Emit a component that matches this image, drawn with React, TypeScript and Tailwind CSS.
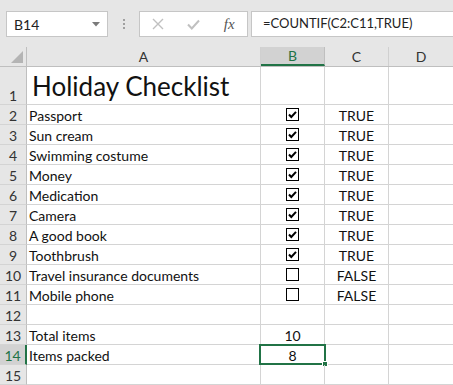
import React from 'react'

const items = [
  { name: 'Passport', packed: true },
  { name: 'Sun cream', packed: true },
  { name: 'Swimming costume', packed: true },
  { name: 'Money', packed: true },
  { name: 'Medication', packed: true },
  { name: 'Camera', packed: true },
  { name: 'A good book', packed: true },
  { name: 'Toothbrush', packed: true },
  { name: 'Travel insurance documents', packed: false },
  { name: 'Mobile phone', packed: false },
]

function CheckBox({ checked }: { checked: boolean }) {
  return (
    <svg className="self-center" width="13" height="13" viewBox="0 0 13 13">
      <rect x="0.5" y="0.5" width="12" height="12" fill="white" stroke="black" />
      {checked && <path d="M3 6.5 L5.3 9 L10 3.8" fill="none" stroke="black" strokeWidth="2" />}
    </svg>
  )
}

type RowProps = {
  num: number
  a?: React.ReactNode
  b?: React.ReactNode
  c?: React.ReactNode
  tall?: boolean
  active?: boolean
}

function Row({ num, a, b, c, tall, active }: RowProps) {
  const h = tall ? 'h-[38px]' : 'h-[20px]'
  return (
    <div className={`flex ${h} leading-[16px]`}>
      <div
        className={`w-[27px] shrink-0 flex items-end justify-center border-b border-[#d4d4d4] text-[14px] ${
          active ? 'bg-[#d2d2d2] text-[#217346] border-r-2 border-r-[#217346]' : 'bg-[#e6e6e6] border-r border-r-[#bfbfbf] text-[#333]'
        }`}
      >
        {num}
      </div>
      <div className="w-[234px] shrink-0 flex items-end pl-[2px] border-r border-b border-[#d4d4d4] whitespace-nowrap">
        {a}
      </div>
      <div className="relative w-[64px] shrink-0 flex items-end justify-center border-r border-b border-[#d4d4d4]">
        {b}
        {active && (
          <>
            <div className="absolute left-[-2px] top-[-1px] w-[67px] h-[21px] border-2 border-[#217346]" />
            <div className="absolute right-[-4px] bottom-[-3px] w-[6px] h-[6px] bg-[#217346] border border-white" />
          </>
        )}
      </div>
      <div className="w-[64px] shrink-0 flex items-end justify-center border-r border-b border-[#d4d4d4]">
        {c}
      </div>
      <div className="flex-1 border-b border-[#d4d4d4]" />
    </div>
  )
}

export default function App() {
  return (
    <div className="w-[453px] h-[385px] overflow-hidden bg-white text-[#111] text-[14px]" style={{ fontFamily: 'Lato, sans-serif' }}>
      {/* formula bar */}
      <div className="h-[47px] bg-[#e6e6e6] flex items-start pt-[11px] pl-[6px]">
        <div className="w-[102px] h-[26px] bg-white border border-[#c6c6c6] flex items-center pl-[7px] pr-[7px] justify-between">
          <span className="text-[14px] text-[#222]">B14</span>
          <svg width="8" height="5" viewBox="0 0 8 5">
            <path d="M0 0 H8 L4 4.5 Z" fill="#7a7a7a" />
          </svg>
        </div>
        <div className="w-[31px] h-[26px] flex flex-col items-center justify-center gap-[2px]">
          <span className="w-[2px] h-[2px] bg-[#a0a0a0]" />
          <span className="w-[2px] h-[2px] bg-[#a0a0a0]" />
          <span className="w-[2px] h-[2px] bg-[#a0a0a0]" />
        </div>
        <div className="w-[109px] h-[26px] bg-white border border-[#c6c6c6] flex items-center">
          <div className="w-[36px] flex justify-center">
            <svg width="12" height="12" viewBox="0 0 12 12">
              <path d="M1 1 L11 11 M11 1 L1 11" stroke="#c0c0c0" strokeWidth="1.4" />
            </svg>
          </div>
          <div className="w-[36px] flex justify-center">
            <svg width="13" height="11" viewBox="0 0 13 11">
              <path d="M1 5.5 L4.8 9.5 L12 1.5" fill="none" stroke="#c0c0c0" strokeWidth="2" />
            </svg>
          </div>
          <div className="w-[36px] flex justify-center">
            <span className="text-[15px] italic text-[#555]" style={{ fontFamily: '"Liberation Serif", serif' }}>
              fx
            </span>
          </div>
        </div>
        <div className="ml-[3px] flex-1 h-[26px] bg-white border border-[#c6c6c6] border-r-0 flex items-center pl-[11px] text-[13px] text-[#222]">
          =COUNTIF(C2:C11,TRUE)
        </div>
      </div>

      {/* column headers */}
      <div className="flex h-[20px] bg-[#e6e6e6] border-b border-[#bfbfbf] text-[14px] text-[#333]">
        <div className="relative w-[27px] shrink-0 border-r border-[#bfbfbf]">
          <svg className="absolute right-[3px] bottom-[3px]" width="12" height="12" viewBox="0 0 12 12">
            <path d="M12 0 V12 H0 Z" fill="#b4b4b4" />
          </svg>
        </div>
        <div className="w-[234px] shrink-0 flex items-center justify-center border-r border-[#d0d0d0]">A</div>
        <div className="w-[64px] shrink-0 flex items-center justify-center bg-[#d2d2d2] border-r border-[#bfbfbf] border-b-2 border-b-[#217346] text-[#217346]">
          B
        </div>
        <div className="w-[64px] shrink-0 flex items-center justify-center border-r border-[#d0d0d0]">C</div>
        <div className="flex-1 flex items-center justify-center">D</div>
      </div>

      <Row
        num={1}
        tall
        a={<span className="text-[26px] leading-none pb-[5px] pl-[3px]">Holiday Checklist</span>}
      />
      {items.map((it, i) => (
        <Row
          key={it.name}
          num={i + 2}
          a={it.name}
          b={<CheckBox checked={it.packed} />}
          c={it.packed ? 'TRUE' : 'FALSE'}
        />
      ))}
      <Row num={12} />
      <Row num={13} a="Total items" b="10" />
      <Row num={14} a="Items packed" b="8" active />
      <Row num={15} />
    </div>
  )
}
